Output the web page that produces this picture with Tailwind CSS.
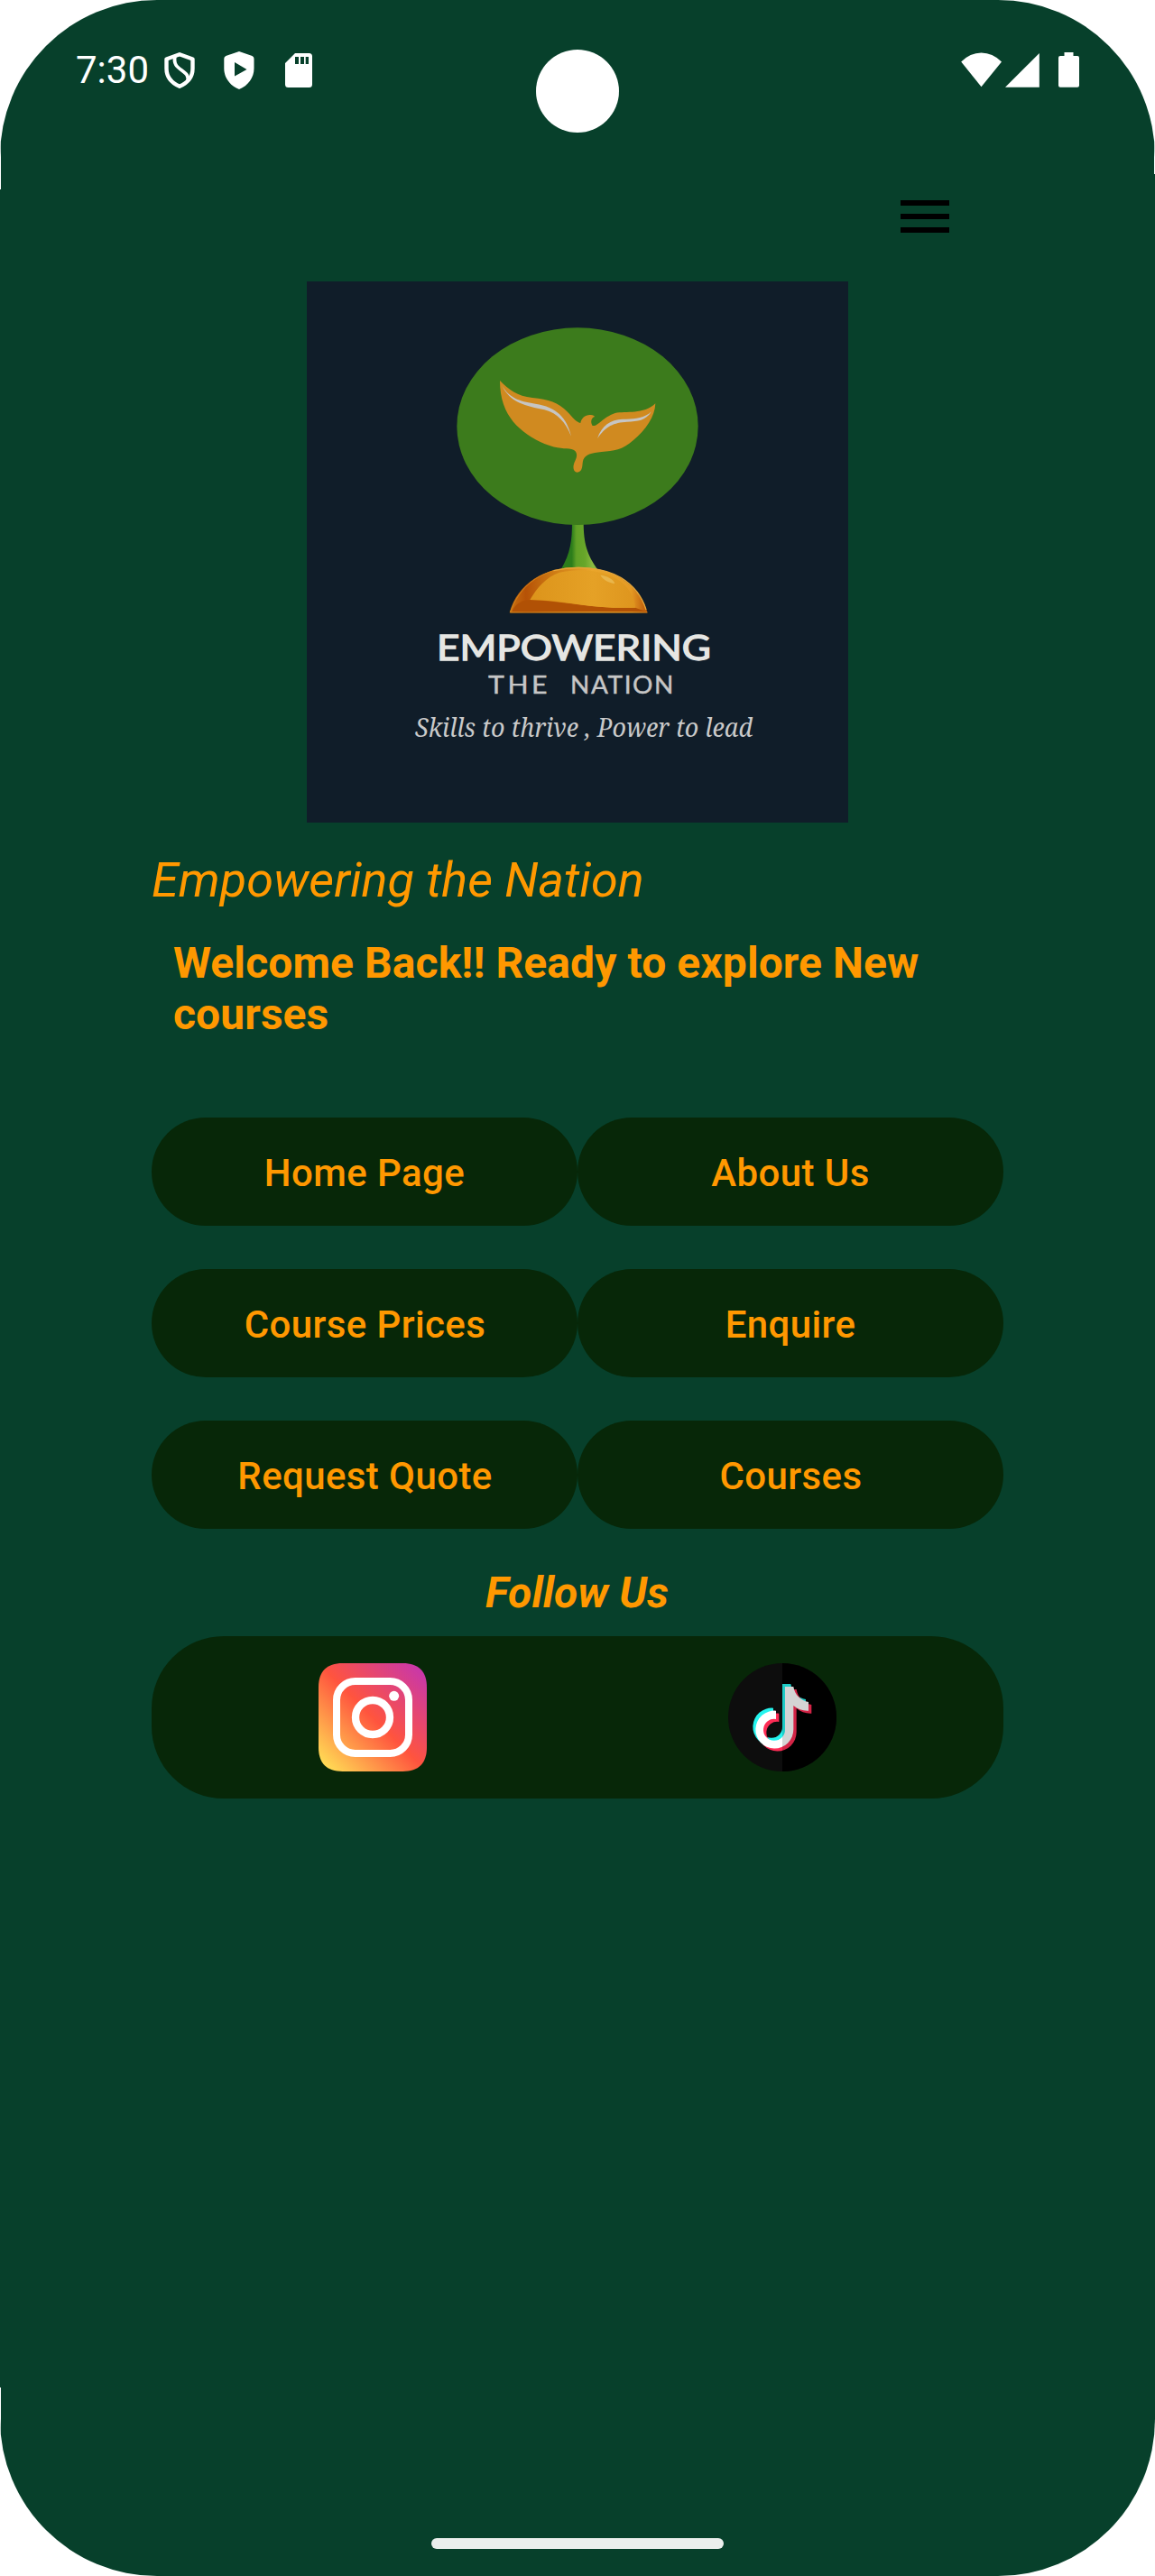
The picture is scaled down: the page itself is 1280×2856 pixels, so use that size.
<!DOCTYPE html>
<html lang="en">
<head>
<meta charset="utf-8">
<title>Empowering the Nation</title>
<script src="https://cdn.jsdelivr.net/npm/@tailwindcss/browser@4"></script>
</head>
<body class="bg-white">
<div class="relative flex h-[2856px] w-[1280px] flex-col overflow-hidden rounded-[174px] bg-[#07402b] font-['Roboto',sans-serif] text-[#ff9800]">

  <!-- Status bar -->
  <header class="flex h-[156px] items-start pt-[56px] pr-[84px] pl-[84px] text-white">
    <span class="mt-[-3px] w-[97px] text-[42px] leading-[50px]">7:30</span>
    <svg class="h-[44px] w-[36px]" viewBox="181 56 36 44" fill="none" stroke="#fff" stroke-width="4.4" stroke-linejoin="round">
      <path d="M199 60.2 L213.5 65.5 V76 C213.500 85 207.500 92 199 95.800 C190.500 92 184.500 85 184.500 76 V65.500 Z"/>
      <path d="M194 62 C192 71 196 74 201.500 78 C207 82 209 84 208 90" stroke-width="3.800"/>
    </svg>
    <svg class="ml-[30px] h-[44px] w-[36px]" viewBox="247 56 36 44">
      <path fill="#fff" fill-rule="evenodd" d="M265 57 L279.500 62 Q281.500 63 281.500 65 V76 C281.500 86 275 95 265 99 C255 95 248.300 86 248.300 76 V65 Q248.300 63 250.300 62 Z M260 69 V84.500 L273.500 77 Z"/>
    </svg>
    <svg class="ml-[32px] h-[44px] w-[32px]" viewBox="315 56 32 44">
      <path fill="#fff" fill-rule="evenodd" d="M327 59 H342.500 Q346 59 346 62.500 V93.500 Q346 97 342.500 97 H319.500 Q316 97 316 93.500 V70 Z M327 63 V71 H331 V63 Z M333 63 V71 H337 V63 Z M338.700 63 V71 H342 V63 Z"/>
    </svg>
    <svg class="ml-auto h-[44px] w-[46px]" viewBox="1065 56 46 44"><path fill="#fff" d="M1087.500 96.300 L1065.200 68.500 Q1075 58.500 1087.500 58.500 T1110 68.500 Z"/></svg>
    <svg class="ml-[2px] h-[44px] w-[40px]" viewBox="1113 56 40 44"><path fill="#fff" d="M1151.800 59 V96.800 H1114 Z"/></svg>
    <svg class="ml-[20px] h-[44px] w-[23px]" viewBox="1173 56 23 44"><path fill="#fff" d="M1179.500 58 H1189.500 V62 H1194 Q1196 62 1196 64 V94.800 Q1196 96.800 1194 96.800 H1175 Q1173 96.800 1173 94.800 V64 Q1173 62 1175 62 H1179.500 Z"/></svg>
  </header>
  <!-- Camera cutout and the hairlines beside the screen corners -->
  <div class="absolute top-[55px] left-[594px] size-[92px] rounded-full bg-white"></div>
  <div class="absolute top-0 left-0 h-[210px] w-px bg-white"></div>
  <div class="absolute top-0 right-0 h-[193px] w-px bg-white"></div>
  <div class="absolute bottom-0 left-0 h-[209px] w-px bg-white"></div>

  <main class="flex flex-col px-[168px]">
    <div class="flex h-[156px] justify-end pt-[66px] pr-[60px]">
      <button class="flex h-[36px] w-[54px] flex-col gap-[9px]" aria-label="Menu">
        <span class="h-[6px] w-full bg-black"></span>
        <span class="h-[6px] w-full bg-black"></span>
        <span class="h-[6px] w-full bg-black"></span>
      </button>
    </div>

    <svg class="size-[600px] self-center bg-[#101d29]" viewBox="340 312 600 600">
      <defs>
        <linearGradient id="trunk" x1="0" x2="1"><stop offset=".3" stop-color="#2c7d1b"/><stop offset=".42" stop-color="#5fa026"/><stop offset=".65" stop-color="#68a62a"/><stop offset=".85" stop-color="#8aba40"/></linearGradient>
        <linearGradient id="dome" x1="0" x2="1"><stop offset="0" stop-color="#c87010"/><stop offset=".12" stop-color="#b65207"/><stop offset=".3" stop-color="#cc7813"/><stop offset=".6" stop-color="#eaa62b"/><stop offset=".88" stop-color="#e59a24"/><stop offset="1" stop-color="#b95508"/></linearGradient>
        <linearGradient id="glow" x1="0" x2="1"><stop offset="0" stop-color="#dc941b"/><stop offset=".6" stop-color="#e5a126"/><stop offset="1" stop-color="#de951e"/></linearGradient>
      </defs>
      <g transform="translate(480 340) scale(.33333)">
        <path fill="url(#trunk)" d="M462 715 H500 C500 790 512 825 548 876 H424 C458 820 462 775 462 715 Z"/>
        <ellipse cx="480" cy="398" rx="401" ry="328" fill="#3c7b1c"/>
        <path fill="#d08a20" d="M222 246 C250 275 280 298 330 303 C385 308 415 318 447 350 C465 369 476 384 490 387 C492 370 508 358 524 360 C532 361 536 363 537 366 C524 370 523 386 530 396 C548 400 560 370 605 354 C640 347 700 360 739 322 C738 365 707 410 665 445 C630 477 600 480 560 483 C525 486 502 493 498 514 C495 530 498 550 478 551 C464 548 464 530 471 515 C480 498 482 480 460 474 C440 471 415 474 372 457 C290 420 222 365 222 246 Z"/>
        <path fill="#c6c5c3" d="M228 260 C255 310 300 316 340 323 C410 333 445 370 459 431 C440 385 415 355 370 343 C310 330 255 320 228 260 Z"/>
        <path fill="#c6c5c3" d="M546 439 C560 395 590 375 630 374 C665 375 700 373 726 349 C706 380 680 382 645 383 C600 386 575 396 546 439 Z"/>
        <path fill="url(#dome)" d="M254 1018 C280 920 370 866 482 866 C600 866 685 925 713 1018 Z"/>
        <path fill="#b15105" d="M262 1014 C275 985 300 975 322 976 C420 978 500 998 600 1001 L672 1001 L708 1014 Z"/>
        <path fill="url(#glow)" d="M322 975 C345 935 375 900 420 884 C480 870 560 875 610 905 C650 930 670 965 672 1001 H600 C500 998 420 976 322 975 Z"/>
        <path fill="none" stroke="#e5a53a" stroke-width="4" d="M400 878 C480 860 570 868 625 902 C670 930 695 965 708 1008"/>
        <path fill="none" stroke="#d58318" stroke-width="3" d="M256 1017 C285 940 330 900 400 878 M256 1017 H712"/>
        <path fill="#e9b64c" d="M556 893 C575 895 600 905 604 921 C585 918 566 910 556 893 Z"/>
      </g>
      <g class="font-['Lato',sans-serif]">
        <text x="484" y="731.500" fill="#e6e6e3" stroke="#e6e6e3" stroke-width="1.300" font-size="38" font-weight="400" textLength="304" lengthAdjust="spacingAndGlyphs">EMPOWERING</text>
        <text x="541" y="769" fill="#c6c6c6" stroke="#c6c6c6" stroke-width=".4" font-size="26" letter-spacing="3" textLength="69" lengthAdjust="spacingAndGlyphs">THE</text>
        <text x="632" y="769" fill="#c6c6c6" stroke="#c6c6c6" stroke-width=".4" font-size="26" letter-spacing="1.500" textLength="116" lengthAdjust="spacingAndGlyphs">NATION</text>
      </g>
      <text class="font-['Noto_Serif','Liberation_Serif',serif]" x="460" y="817" fill="#cacaca" font-size="29" font-style="italic" textLength="374" lengthAdjust="spacingAndGlyphs">Skills to thrive , Power to lead</text>
    </svg>

    <h1 class="mt-[32px] text-[54px] leading-[64px] italic">Empowering the Nation</h1>
    <p class="mt-[31px] px-[24px] text-[48px] leading-[57px] font-bold tracking-[0.08px]">Welcome Back!! Ready to explore New courses</p>

    <nav class="mt-[86px] grid grid-cols-2 gap-y-[48px] text-[42px] leading-[50px] font-medium tracking-[0.4px]">
      <button class="h-[120px] rounded-full bg-[#072708] pt-[3px]">Home Page</button>
      <button class="h-[120px] rounded-full bg-[#072708] pt-[3px]">About Us</button>
      <button class="h-[120px] rounded-full bg-[#072708] pt-[3px] pl-[1px]">Course Prices</button>
      <button class="h-[120px] rounded-full bg-[#072708] pt-[3px]">Enquire</button>
      <button class="h-[120px] rounded-full bg-[#072708] pt-[3px] pl-[1px]">Request Quote</button>
      <button class="h-[120px] rounded-full bg-[#072708] pt-[3px] pl-[1px]">Courses</button>
    </nav>

    <h2 class="mt-[42px] pr-[1px] text-center text-[48px] leading-[57px] font-bold italic">Follow Us</h2>

    <div class="mt-[20px] flex h-[180px] items-center justify-between rounded-[80px] bg-[#072708] px-[185px]">
      <svg class="size-[120px]" viewBox="69 72 360 360">
        <defs><linearGradient id="ig" x1="0" y1="1" x2="1" y2="0"><stop offset=".05" stop-color="#ffdd55"/><stop offset=".5" stop-color="#ff543e"/><stop offset=".95" stop-color="#c837ab"/></linearGradient></defs>
        <path fill="url(#ig)" d="M149 72 H349 C402 72 429 99 429 152 V352 C429 405 402 432 349 432 H149 C96 432 69 405 69 352 V152 C69 99 96 72 149 72 Z"/>
        <rect x="129" y="132" width="240" height="240" rx="62" fill="none" stroke="#fff" stroke-width="24"/>
        <circle cx="249" cy="252" r="57" fill="none" stroke="#fff" stroke-width="25"/>
        <circle cx="320" cy="181" r="16.500" fill="#fff"/>
      </svg>
      <svg class="size-[120px]" viewBox="81 72 360 360">
        <defs>
          <path id="note" d="M270 150 H298 C302 177 322 196 348 201 V230 C330 231 312 225 298 213 V292 A63 63 0 1 1 240 230 V258 A36 36 0 1 0 270 292 Z"/>
          <clipPath id="right"><rect x="261" y="72" width="180" height="360"/></clipPath>
        </defs>
        <circle cx="261" cy="252" r="180" fill="#0d0d0d"/>
        <circle cx="261" cy="252" r="180" fill="#000" clip-path="url(#right)"/>
        <use href="#note" x="-9" y="-9" fill="#25f4ee"/>
        <use href="#note" x="10" y="9" fill="#fe2c55"/>
        <use href="#note" fill="#fff"/>
        <rect x="261" y="120" width="110" height="260" fill="#000" opacity=".17"/>
      </svg>
    </div>
  </main>

  <footer class="mt-auto flex justify-center pb-[30px]">
    <div class="h-[12px] w-[324px] rounded-full bg-[#ebefed]"></div>
  </footer>
</div>
</body>
</html>
